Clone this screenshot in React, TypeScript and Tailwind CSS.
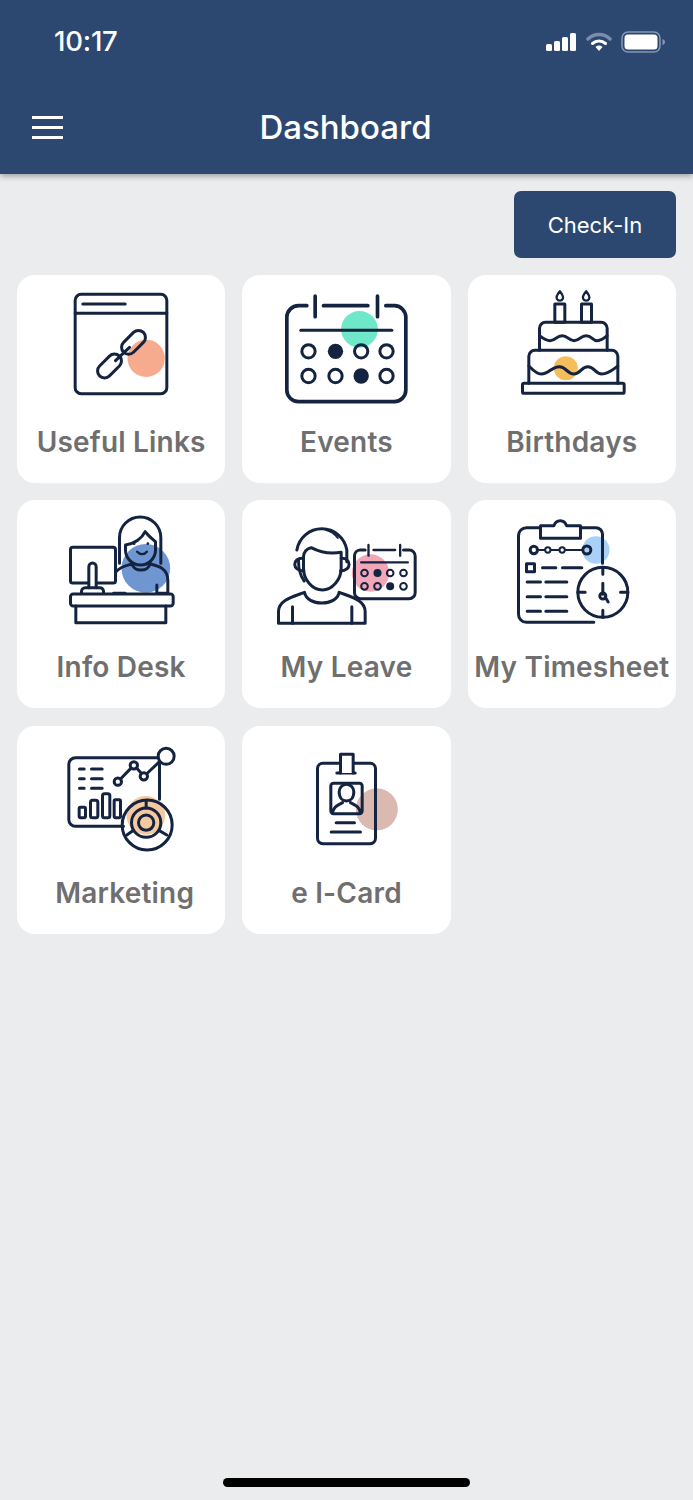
import type { ReactNode } from "react";

const INK = "#14233f";

// Line art shares one 3x coordinate space, so a card's drawing is 624 units wide
function Art({ children }: { children: ReactNode }) {
  return (
    <svg
      viewBox="21 15 624 426"
      className="block w-full h-[142px]"
      fill="none"
      stroke={INK}
      strokeWidth="9"
      strokeLinecap="round"
      strokeLinejoin="round"
    >
      {children}
    </svg>
  );
}

function LinksIcon() {
  return (
    <Art>
      <circle cx="408" cy="265" r="56" fill="#f6ab8f" stroke="none" />
      <rect x="195" y="73" width="275" height="298" rx="18" />
      <path d="M195 130H470M218 102H345" />
      <rect x="328" y="196" width="84" height="42" rx="21" transform="rotate(-45 370 217)" />
      <rect x="256" y="267" width="84" height="42" rx="21" transform="rotate(-45 298 288)" />
      <path d="M358 232L316 272" />
    </Art>
  );
}

function EventsIcon() {
  const dots = [
    [220, 244, false],
    [301, 244, true],
    [378, 244, false],
    [454, 244, false],
    [220, 318, false],
    [301, 318, false],
    [378, 318, true],
    [454, 318, false],
  ] as const;
  return (
    <Art>
      <circle cx="373" cy="178" r="55" fill="#6ee8c8" stroke="none" />
      <path
        d="M215 107H190A35 35 0 0 0 155 142V360A35 35 0 0 0 190 395H478A35 35 0 0 0 512 360V142A35 35 0 0 0 478 107H452"
        strokeWidth="11"
      />
      <path d="M240 78V140M427 78V140M265 107H398" strokeWidth="11" />
      <path d="M197 181H470" />
      {dots.map(([cx, cy, filled]) => (
        <circle key={`${cx}-${cy}`} cx={cx} cy={cy} r={filled ? 23 : 20} fill={filled ? INK : "none"} stroke={filled ? "none" : INK} strokeWidth="9" />
      ))}
    </Art>
  );
}

function CakeIcon() {
  return (
    <Art>
      <circle cx="314" cy="295" r="36" fill="#f5bd5c" stroke="none" />
      <rect x="281" y="102" width="30" height="55" />
      <rect x="361" y="102" width="30" height="55" />
      <path d="M296 64C288 74 284 80 287 86A10 10 0 0 0 305 86C308 80 304 74 296 64ZM375 64C367 74 363 80 366 86A10 10 0 0 0 384 86C387 80 383 74 375 64Z" strokeWidth="7" />
      <path d="M235 241V175A18 18 0 0 1 253 157H420A18 18 0 0 1 438 175V241" />
      <path d="M235 197C245 205 255 212 267 212C285 212 285 197 303 197C321 197 321 212 339 212C357 212 357 197 375 197C393 197 393 212 408 212C420 212 430 204 438 197" />
      <path d="M203 340V259A18 18 0 0 1 221 241H452A18 18 0 0 1 470 259V340" />
      <path d="M203 288C215 300 226 312 240 312C265 312 270 290 295 290C315 290 318 312 338 312C358 312 360 290 380 290C400 290 402 312 422 312C442 312 456 298 470 288" />
      <rect x="184" y="340" width="305" height="30" rx="5" />
    </Art>
  );
}

function DeskIcon() {
  return (
    <Art>
      <ellipse cx="407" cy="220" rx="73" ry="73" fill="#7096d1" stroke="none" />
      <path d="M328 205V128A62 62 0 0 1 452 128V205" />
      <path d="M346 150C375 145 395 130 405 110C420 128 430 135 436 140V165A45 45 0 0 1 346 165Z" />
      <path d="M381 170C390 180 402 180 410 170" strokeWidth="7" />
      <circle cx="372" cy="146" r="4" fill={INK} stroke="none" />
      <circle cx="413" cy="146" r="4" fill={INK} stroke="none" />
      <path d="M365 205C370 232 415 232 420 205" />
      <path d="M318 230C330 215 350 212 365 207M420 207C445 213 472 220 473 255V295M440 270V295" />
      <rect x="181" y="157" width="135" height="107" rx="7" />
      <path d="M236 278V215A11 11 0 0 1 258 215V278" fill="#ffffff" />
      <path d="M214 295V289A11 11 0 0 1 225 278H268A11 11 0 0 1 280 289V295M310 295H345M440 295H470" />
      <rect x="181" y="297" width="308" height="36" rx="8" />
      <path d="M197 333V383H467V333" />
    </Art>
  );
}

function LeaveIcon() {
  const dots = [
    [388, 234, false],
    [427, 234, true],
    [465, 234, false],
    [505, 234, false],
    [388, 274, false],
    [427, 274, false],
    [465, 274, true],
    [505, 274, false],
  ] as const;
  return (
    <Art>
      <circle cx="406" cy="234" r="56" fill="#f2a7b8" stroke="none" />
      <path d="M207 258C194 240 190 225 190 195" />
      <path d="M185 165A76 76 0 0 1 335 165V200" />
      <path d="M271 104A62 62 0 0 1 308 129" strokeWidth="6" />
      <path d="M205 185C205 172 215 160 228 158C255 172 285 178 318 172V220C318 255 290 285 262 285C232 285 205 255 205 220Z" />
      <path d="M204 190C170 188 170 228 206 228M318 190C350 188 350 228 316 228" />
      <path d="M130 385V350C130 315 175 305 208 292C215 335 305 335 312 292C345 305 390 315 390 350V385Z" />
      <path d="M172 335V385M350 335V385" />
      <path d="M390 165H375A18 18 0 0 0 358 183V293A18 18 0 0 0 376 311H522A18 18 0 0 0 540 293V183A18 18 0 0 0 522 165H505" />
      <path d="M400 150V182M495 150V182M415 165H480M378 202H518" strokeWidth="7" />
      {dots.map(([cx, cy, filled]) => (
        <circle key={`${cx}-${cy}`} cx={cx} cy={cy} r={filled ? 12 : 10} fill={filled ? INK : "none"} stroke={filled ? "none" : INK} strokeWidth="6" />
      ))}
    </Art>
  );
}

function TimesheetIcon() {
  return (
    <Art>
      <circle cx="404" cy="165" r="41" fill="#a9d0f7" stroke="none" />
      <path d="M236 98H196A24 24 0 0 0 172 122V358A24 24 0 0 0 196 382H398M358 98H404A20 20 0 0 1 424 118V205" />
      <path d="M238 130V92H278C285 72 310 72 316 92H358V130Z" />
      <path d="M230 165H250M270 165H292M314 165H364" strokeWidth="6" />
      <circle cx="218" cy="165" r="11" />
      <circle cx="260" cy="165" r="8" strokeWidth="6" />
      <circle cx="303" cy="165" r="8" strokeWidth="6" />
      <circle cx="377" cy="165" r="12" />
      <rect x="196" y="206" width="24" height="24" />
      <path d="M244 218H284M304 218H362M198 261H238M254 261H317M198 305H238M254 305H317M198 349H238M254 349H317" />
      <circle cx="425" cy="292" r="75" />
      <path d="M425 217V238M425 346V367M350 292H372M478 292H500M425 265V298M432 306L441 321" />
      <circle cx="425" cy="303" r="9" />
    </Art>
  );
}

function MarketingIcon() {
  return (
    <Art>
      <circle cx="407" cy="283" r="58" fill="#f5c9a0" stroke="none" />
      <path d="M448 128V235M340 316H196A20 20 0 0 1 176 296V130A20 20 0 0 1 196 110H440" />
      <path d="M208 144H222M244 144H276M208 173H222M244 173H276M208 202H222M244 202H276" strokeWidth="9" />
      <rect x="207" y="259" width="19" height="31" rx="4" />
      <rect x="241" y="238" width="22" height="52" rx="6" />
      <rect x="277" y="218" width="22" height="72" rx="6" />
      <rect x="312" y="236" width="19" height="54" rx="4" />
      <path d="M331 174L362 142M380 142L392 155M412 156L448 122" />
      <circle cx="323" cy="182" r="11" />
      <circle cx="371" cy="133" r="11" />
      <circle cx="401" cy="166" r="11" />
      <circle cx="468" cy="106" r="24" fill="#ffffff" />
      <circle cx="411" cy="312" r="75" fill="none" />
      <circle cx="408" cy="305" r="44" />
      <circle cx="408" cy="305" r="23" />
      <path d="M408 238V261M350 342L370 328M470 342L446 328" />
    </Art>
  );
}

function IdCardIcon() {
  return (
    <Art>
      <circle cx="425" cy="265" r="63" fill="#d9b9b0" stroke="none" />
      <rect x="247" y="127" width="174" height="241" rx="16" />
      <path d="M305 156H360" />
      <path d="M316 156V100H354V156" fill="#ffffff" />
      <rect x="287" y="187" width="94" height="91" rx="8" />
      <path d="M312 212A22 22 0 0 1 356 212C356 232 345 240 334 240C323 240 312 232 312 212Z" />
      <path d="M292 275C296 255 310 252 322 245M376 275C372 255 358 252 346 245" />
      <path d="M303 305H358M288 333H376" />
    </Art>
  );
}

const TILES = [
  { label: "Useful Links", icon: <LinksIcon />, inset: "" },
  { label: "Events", icon: <EventsIcon />, inset: "" },
  { label: "Birthdays", icon: <CakeIcon />, inset: "" },
  { label: "Info Desk", icon: <DeskIcon />, inset: "" },
  { label: "My Leave", icon: <LeaveIcon />, inset: "" },
  { label: "My Timesheet", icon: <TimesheetIcon />, inset: "" },
  { label: "Marketing", icon: <MarketingIcon />, inset: "pl-[7px]" },
  { label: "e I-Card", icon: <IdCardIcon />, inset: "" },
];

function StatusIcons() {
  return (
    <div className="flex items-center gap-[9px]">
      <svg width="31" height="18" viewBox="0 0 31 18" fill="#ffffff">
        <rect x="0" y="11" width="6" height="7" rx="1.5" />
        <rect x="8" y="8" width="6" height="10" rx="1.5" />
        <rect x="16" y="4" width="6" height="14" rx="1.5" />
        <rect x="24" y="0" width="6" height="18" rx="1.5" />
      </svg>
      <svg width="26" height="20" viewBox="0 0 26 20" fill="none" strokeLinecap="round">
        <path d="M2 7A16 16 0 0 1 24 7" stroke="#7a8dab" strokeWidth="3.5" />
        <path d="M6.5 11.5A10 10 0 0 1 19.5 11.5" stroke="#ffffff" strokeWidth="3" />
        <path d="M13 19L9.5 15A5 5 0 0 1 16.5 15Z" fill="#ffffff" />
      </svg>
      <svg width="44" height="22" viewBox="0 0 44 22" fill="none">
        <rect x="1" y="1" width="38" height="20" rx="6" stroke="#8497b3" strokeWidth="1.5" />
        <rect x="3.5" y="3.5" width="33" height="15" rx="3.5" fill="#ffffff" />
        <path d="M41.5 8V14C43 13.5 44 12.5 44 11S43 8.5 41.5 8Z" fill="#8497b3" />
      </svg>
    </div>
  );
}

export default function App() {
  return (
    <div className="relative flex flex-col h-[1500px] bg-[#ebecee] font-['Inter','Liberation_Sans',sans-serif]">
      <header className="h-[174px] shrink-0 bg-[#2d4870] text-white shadow-[0_2px_6px_rgba(0,0,0,0.35)] flex flex-col">
        <div className="flex items-center justify-between h-[83px] pl-[54px] pr-[28px]">
          <span className="text-[27.5px] font-medium leading-none tracking-[-0.2px]">10:17</span>
          <StatusIcons />
        </div>
        <div className="relative flex items-center justify-center h-[54px] mt-[17px]">
          <div className="absolute left-[32px] flex flex-col gap-[7px]">
            <span className="block w-[31px] h-[3px] bg-white" />
            <span className="block w-[31px] h-[3px] bg-white" />
            <span className="block w-[31px] h-[3px] bg-white" />
          </div>
          <h1 className="text-[33px] font-medium leading-none ml-[-2px]">Dashboard</h1>
        </div>
      </header>

      <div className="flex justify-end pt-[17px] pr-[17px]">
        <button className="w-[162px] h-[67px] rounded-[7px] bg-[#2d4870] text-white text-[22px] leading-none">
          Check-In
        </button>
      </div>

      <div className="grid grid-cols-3 gap-x-[17px] gap-y-[17.4px] px-[17px] pt-[17px]">
        {TILES.map((tile) => (
          <div key={tile.label} className="h-[208px] rounded-[18px] bg-white overflow-hidden">
            {tile.icon}
            <p className={`mt-[5px] text-center whitespace-nowrap text-[#6f6f6f] text-[28px] font-semibold leading-[40px] tracking-[0.2px] ${tile.inset}`}>
              {tile.label}
            </p>
          </div>
        ))}
      </div>

      <div className="absolute bottom-[13px] left-[223px] w-[247px] h-[9px] rounded-full bg-black" />
    </div>
  );
}
